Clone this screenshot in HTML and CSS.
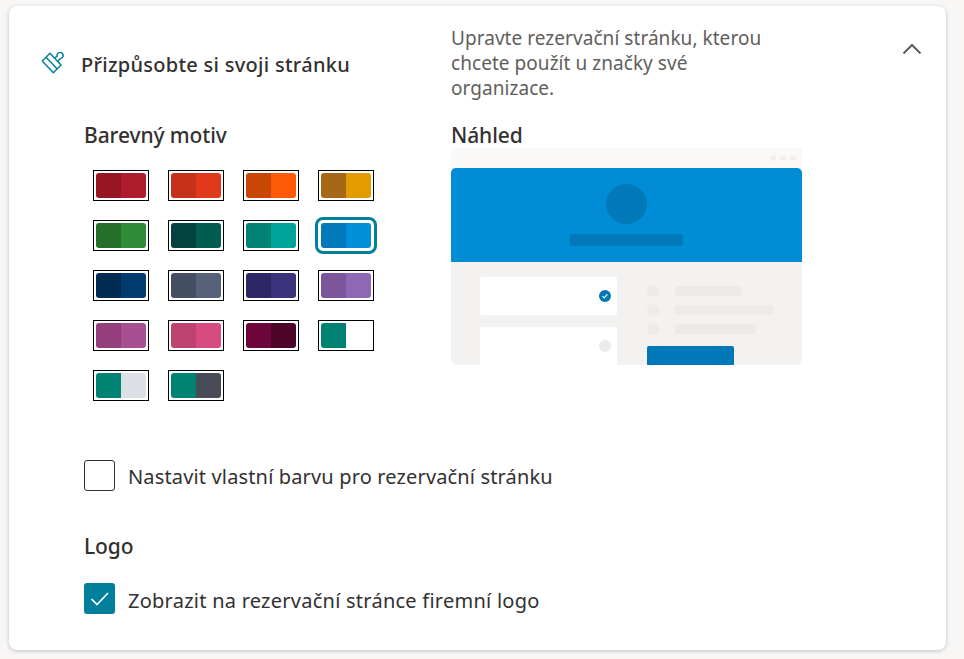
FILE: index.html
```html
<!DOCTYPE html>
<html lang="cs">
<head>
    <meta charset="UTF-8">
    <title>Přizpůsobte si svoji stránku</title>
    <link rel="stylesheet" href="styles.css">
</head>
<body>
<div class="card">
    <div class="head">
        <div class="head-title">
            <svg class="brush" width="24" height="24" viewBox="0 0 24 24" fill="none" stroke="#00809d" stroke-width="1.5" stroke-linejoin="round">
                <path d="M9 2.3 L1.3 10 L12.3 21.7 L20 14 Z"/>
                <path d="M5 6.3 L16.3 18"/>
                <path d="M13.5 6.8 L16.2 5.3 A3 3 0 1 1 20.4 7.2 L18 8.6 L16.8 11"/>
            </svg>
            <h2>Přizpůsobte si svoji stránku</h2>
        </div>
        <p class="desc">Upravte rezervační stránku, kterou chcete použít u značky své organizace.</p>
        <svg class="chevron" width="20" height="12" viewBox="0 0 20 12" fill="none" stroke="#605e5c" stroke-width="2">
            <path d="M1.5 10.5 L10 2 L18.5 10.5"/>
        </svg>
    </div>

    <div class="body">
        <div class="themes">
            <h3>Barevný motiv</h3>
            <div class="swatches">
                <div class="swatch"><span class="c1"></span><span class="c2"></span></div>
                <div class="swatch"><span class="c3"></span><span class="c4"></span></div>
                <div class="swatch"><span class="c5"></span><span class="c6"></span></div>
                <div class="swatch"><span class="c7"></span><span class="c8"></span></div>
                <div class="swatch"><span class="c9"></span><span class="c10"></span></div>
                <div class="swatch"><span class="c11"></span><span class="c12"></span></div>
                <div class="swatch"><span class="c13"></span><span class="c14"></span></div>
                <div class="swatch current"><span class="c15"></span><span class="c16"></span></div>
                <div class="swatch"><span class="c17"></span><span class="c18"></span></div>
                <div class="swatch"><span class="c19"></span><span class="c20"></span></div>
                <div class="swatch"><span class="c21"></span><span class="c22"></span></div>
                <div class="swatch"><span class="c23"></span><span class="c24"></span></div>
                <div class="swatch"><span class="c25"></span><span class="c26"></span></div>
                <div class="swatch"><span class="c27"></span><span class="c28"></span></div>
                <div class="swatch"><span class="c29"></span><span class="c30"></span></div>
                <div class="swatch"><span class="c31"></span><span class="c32"></span></div>
                <div class="swatch"><span class="c31"></span><span class="c33"></span></div>
                <div class="swatch"><span class="c31"></span><span class="c34"></span></div>
            </div>
        </div>

        <div class="preview-col">
            <h3>Náhled</h3>
            <div class="preview">
                <div class="pv-top"><i></i><i></i><i></i></div>
                <div class="pv-banner">
                    <div class="pv-avatar"></div>
                    <div class="pv-name"></div>
                </div>
                <div class="pv-main">
                    <div class="pv-services">
                        <div class="pv-service">
                            <span class="pv-tick">
                                <svg width="12" height="12" viewBox="0 0 12 12" fill="none" stroke="#fff" stroke-width="1.2"><path d="M3.6 6.2 L5.2 7.8 L8.4 4.4"/></svg>
                            </span>
                        </div>
                        <div class="pv-service"><span class="pv-radio"></span></div>
                    </div>
                    <div class="pv-details">
                        <div class="pv-row"><i></i><b class="w67"></b></div>
                        <div class="pv-row"><i></i><b class="w98"></b></div>
                        <div class="pv-row"><i></i><b class="w81"></b></div>
                        <div class="pv-btn"></div>
                    </div>
                </div>
            </div>
        </div>
    </div>

    <label class="check custom"><span class="box"></span><span class="check-text">Nastavit vlastní barvu pro rezervační stránku</span></label>

    <h3 class="logo-title">Logo</h3>
    <label class="check">
        <span class="box on">
            <svg width="31" height="31" viewBox="0 0 31 31" fill="none" stroke="#fff" stroke-width="1.7"><path d="M7.5 16 L13 21.5 L24 10"/></svg>
        </span><span class="check-text wide">Zobrazit na rezervační stránce firemní logo</span></label>
</div>
</body>
</html>
```
FILE: styles.css
```css
*{margin: 0; padding: 0; box-sizing: border-box;}
html,body {height: 100%;}
body {
    background-color: #f8f7f6;
    padding: 6px 18px 0 9px;
    font-family: "Noto Sans", "Open Sans", sans-serif;
    color: #323130;
    overflow: hidden;
}
.card {
    width: 937px;
    height: 644px;
    background-color: #fff;
    border-radius: 8px;
    box-shadow: 0 1px 4px rgba(0,0,0,.22);
    padding: 20px 0 0 75px;
}
.head {
    display: flex;
    height: 96px;
    margin-left: -42px;
}
.head-title {
    width: 409px;
    display: flex;
    align-items: flex-start;
    padding-top: 25px;
}
.brush {
    margin: 0 16px 0 -1px;
}
h2 {
    font-size: 20px;
    font-weight: 500;
    line-height: 26px;
    letter-spacing: .28px;
    margin-top: 1px;
}
.desc {
    width: 320px;
    font-size: 19px;
    line-height: 25px;
    letter-spacing: .05px;
    color: #605e5c;
}
.chevron {
    margin: 17px 0 0 131px;
}
h3 {
    font-size: 21px;
    font-weight: 500;
    line-height: 26px;
    height: 26px;
    letter-spacing: -.1px;
}

.body {
    display: flex;
}
.themes {
    width: 367px;
}
.swatches {
    display: grid;
    grid-template-columns: repeat(4, 56px);
    gap: 19px;
    margin: 22px 0 0 9px;
}
.swatch {
    height: 31px;
    border: 1px solid #000;
    padding: 2px;
    display: flex;
    position: relative;
}
.swatch span {
    flex: 1;
}
.swatch span:first-child {border-radius: 3px 0 0 3px;}
.swatch span:last-child {border-radius: 0 3px 3px 0;}
.swatch.current {
    border-color: transparent;
}
.swatch.current::after {
    content: "";
    position: absolute;
    top: -4px;
    left: -4px;
    right: -4px;
    bottom: -4px;
    border: 3px solid #00809d;
    border-radius: 8px;
}
.c1 {background-color: #971624;}
.c2 {background-color: #ae1c2b;}
.c3 {background-color: #c53219;}
.c4 {background-color: #e0391c;}
.c5 {background-color: #ca4605;}
.c6 {background-color: #ff5a06;}
.c7 {background-color: #a66816;}
.c8 {background-color: #e39c00;}
.c9 {background-color: #256f2b;}
.c10 {background-color: #2e8b37;}
.c11 {background-color: #03423e;}
.c12 {background-color: #015c51;}
.c13 {background-color: #018374;}
.c14 {background-color: #02a399;}
.c15 {background-color: #0179bb;}
.c16 {background-color: #018fd7;}
.c17 {background-color: #022c54;}
.c18 {background-color: #023b6f;}
.c19 {background-color: #444f64;}
.c20 {background-color: #556277;}
.c21 {background-color: #2d2865;}
.c22 {background-color: #3b337c;}
.c23 {background-color: #7c559b;}
.c24 {background-color: #8f68b5;}
.c25 {background-color: #943f7c;}
.c26 {background-color: #aa4e92;}
.c27 {background-color: #bd426f;}
.c28 {background-color: #d64b80;}
.c29 {background-color: #6d073b;}
.c30 {background-color: #4e0529;}
.c31 {background-color: #018374;}
.c32 {background-color: #fff;}
.c33 {background-color: #dce0e4;}
.c34 {background-color: #484c56;}

.preview-col {
    width: 351px;
}
.preview {
    height: 217px;
    border-radius: 0 0 6px 6px;
    overflow: hidden;
    background-color: #f3f2f1;
}
.pv-top {
    height: 20px;
    background-color: #faf9f8;
    display: flex;
    justify-content: flex-end;
    gap: 4px;
    padding: 7px 6px 0 0;
}
.pv-top i {
    width: 6px;
    height: 6px;
    border-radius: 50%;
    background-color: #f0efed;
}
.pv-banner {
    height: 94px;
    background-color: #018dd6;
    border-radius: 5px 5px 0 0;
    display: flex;
    flex-direction: column;
    align-items: center;
    padding-top: 16px;
}
.pv-avatar {
    width: 41px;
    height: 40px;
    border-radius: 50%;
    background-color: #0179b9;
}
.pv-name {
    width: 113px;
    height: 12px;
    margin-top: 10px;
    border-radius: 2px;
    background-color: #0179b9;
}
.pv-main {
    display: flex;
    padding: 15px 0 0 29px;
}
.pv-services {
    width: 137px;
    margin-right: 30px;
}
.pv-service {
    height: 38px;
    margin-bottom: 12px;
    background-color: #fff;
    border-radius: 2px;
    display: flex;
    align-items: center;
    justify-content: flex-end;
    padding-right: 6px;
}
.pv-tick, .pv-radio {
    width: 12px;
    height: 12px;
    border-radius: 50%;
    display: block;
}
.pv-tick {background-color: #0179b9;}
.pv-tick svg {display: block;}
.pv-radio {background-color: #edebe9;}
.pv-details {
    padding-top: 8px;
}
.pv-row {
    display: flex;
    align-items: center;
    height: 12px;
    margin-bottom: 7px;
}
.pv-row i {
    width: 12px;
    height: 12px;
    border-radius: 50%;
    background-color: #edebe9;
    margin-right: 16px;
}
.pv-row b {
    height: 10px;
    border-radius: 2px;
    background-color: #edebe9;
}
.w67 {width: 67px;}
.w98 {width: 98px;}
.w81 {width: 81px;}
.pv-btn {
    width: 87px;
    height: 30px;
    margin-top: 11px;
    border-radius: 2px;
    background-color: #0179b9;
}

.check {
    display: flex;
    align-items: flex-start;
    height: 31px;
    font-size: 20px;
    line-height: 31px;
    letter-spacing: .15px;
}
.check-text {
    padding-top: 1px;
}
.check-text.wide {
    padding-top: 2px;
    letter-spacing: .25px;
}
.custom {
    margin-top: 59px;
}
.box {
    width: 31px;
    height: 31px;
    border: 1px solid #323130;
    border-radius: 3px;
    margin-right: 13px;
}
.box.on {
    border: 0;
    background-color: #00809d;
}
.box svg {display: block;}
.logo-title {
    margin-top: 42px;
    margin-bottom: 24px;
}
```
